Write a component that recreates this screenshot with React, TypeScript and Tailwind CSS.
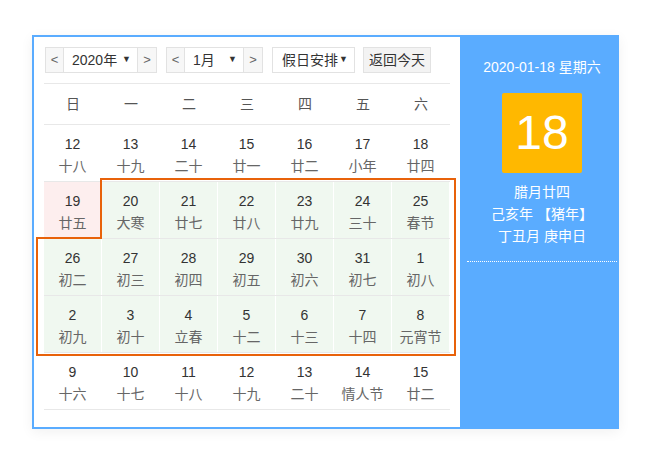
import React from 'react';

const FONT = { fontFamily: '"Liberation Sans", "Noto Sans CJK SC", sans-serif' };

type Cell = { d: number; l: string; bg?: 'pink' | 'green' };

const weekdays = ['日', '一', '二', '三', '四', '五', '六'];

const rows: Cell[][] = [
  [
    { d: 12, l: '十八' },
    { d: 13, l: '十九' },
    { d: 14, l: '二十' },
    { d: 15, l: '廿一' },
    { d: 16, l: '廿二' },
    { d: 17, l: '小年' },
    { d: 18, l: '廿四' },
  ],
  [
    { d: 19, l: '廿五', bg: 'pink' },
    { d: 20, l: '大寒', bg: 'green' },
    { d: 21, l: '廿七', bg: 'green' },
    { d: 22, l: '廿八', bg: 'green' },
    { d: 23, l: '廿九', bg: 'green' },
    { d: 24, l: '三十', bg: 'green' },
    { d: 25, l: '春节', bg: 'green' },
  ],
  [
    { d: 26, l: '初二', bg: 'green' },
    { d: 27, l: '初三', bg: 'green' },
    { d: 28, l: '初四', bg: 'green' },
    { d: 29, l: '初五', bg: 'green' },
    { d: 30, l: '初六', bg: 'green' },
    { d: 31, l: '初七', bg: 'green' },
    { d: 1, l: '初八', bg: 'green' },
  ],
  [
    { d: 2, l: '初九', bg: 'green' },
    { d: 3, l: '初十', bg: 'green' },
    { d: 4, l: '立春', bg: 'green' },
    { d: 5, l: '十二', bg: 'green' },
    { d: 6, l: '十三', bg: 'green' },
    { d: 7, l: '十四', bg: 'green' },
    { d: 8, l: '元宵节', bg: 'green' },
  ],
  [
    { d: 9, l: '十六' },
    { d: 10, l: '十七' },
    { d: 11, l: '十八' },
    { d: 12, l: '十九' },
    { d: 13, l: '二十' },
    { d: 14, l: '情人节' },
    { d: 15, l: '廿二' },
  ],
];

function Stepper({ label, mid }: { label: string; mid: string }) {
  return (
    <div className={`flex h-[26px] border border-[#e2e2e2] ${mid}`}>
      <div className="w-[18px] bg-[#f7f7f7] border-r border-[#e2e2e2] flex items-center justify-center text-[13px] text-[#666]">
        &lt;
      </div>
      <div className="flex-1 flex items-center justify-between pl-[8px] pr-[6px] text-[14px] text-[#333]">
        <span>{label}</span>
        <span className="text-[9px] text-[#333]">▼</span>
      </div>
      <div className="w-[19px] bg-[#f7f7f7] border-l border-[#e2e2e2] flex items-center justify-center text-[13px] text-[#666]">
        &gt;
      </div>
    </div>
  );
}

export default function App() {
  return (
    <div className="min-h-[460px] bg-white pt-[35px] pl-[32px]" style={FONT}>
      <div className="flex w-[587px] h-[394px] border-2 border-[#5aacff] shadow-[0_3px_12px_rgba(0,0,0,0.06)]">
        {/* left: calendar */}
        <div className="relative shrink-0 w-[426px] bg-white px-[10px] pt-[10px]">
          {/* toolbar */}
          <div className="flex items-center pl-[1px]">
            <Stepper label="2020年" mid="w-[112px]" />
            <div className="ml-[9px]">
              <Stepper label="1月" mid="w-[97px]" />
            </div>
            <div className="ml-[9px] w-[83px] h-[26px] border border-[#e2e2e2] flex items-center justify-between pl-[9px] pr-[6px] text-[14px] text-[#333]">
              <span>假日安排</span>
              <span className="text-[9px]">▼</span>
            </div>
            <div className="ml-[8px] w-[68px] h-[26px] border border-[#e2e2e2] bg-[#f3f3f3] flex items-center justify-center text-[14px] text-[#333]">
              返回今天
            </div>
          </div>

          {/* table */}
          <div className="mt-[10px] border-t border-[#e8e8e8]">
            <div className="grid grid-cols-7 h-[41px] border-b border-[#e8e8e8]">
              {weekdays.map((w) => (
                <div key={w} className="flex items-center justify-center text-[14px] text-[#555]">
                  {w}
                </div>
              ))}
            </div>
            {rows.map((row, i) => (
              <div key={i} className="grid grid-cols-7 h-[57px] border-b border-[#e8e8e8]">
                {row.map((c, j) => (
                  <div
                    key={j}
                    className={`flex flex-col items-center pt-[9px] border-r border-white ${
                      c.bg === 'pink' ? 'bg-[#fdeeee]' : c.bg === 'green' ? 'bg-[#f0f8f0]' : ''
                    }`}
                  >
                    <span className="text-[14px] leading-[20px] text-[#333]">{c.d}</span>
                    <span className="mt-[1px] text-[14px] leading-[22px] text-[#666]">{c.l}</span>
                  </div>
                ))}
              </div>
            ))}
          </div>

          {/* holiday outline */}
          <svg className="absolute left-0 top-0 pointer-events-none" width="426" height="390">
            <path
              d="M67 142 H421 V318 H3 V201 H67 Z"
              fill="none"
              stroke="#e8620a"
              strokeWidth="2"
            />
          </svg>
        </div>

        {/* right: today panel */}
        <div className="flex-1 bg-[#5aacff] flex flex-col items-center pt-[21px] pl-[7px] text-white">
          <div className="text-[14px] leading-[18px]">2020-01-18 星期六</div>
          <div className="mt-[17px] w-[80px] h-[80px] rounded-[2px] bg-[#ffb800] flex items-center justify-center text-[48px] leading-none">
            18
          </div>
          <div className="mt-[8px] flex flex-col items-center text-[14px] leading-[22px]">
            <span>腊月廿四</span>
            <span>己亥年 【猪年】</span>
            <span>丁丑月 庚申日</span>
          </div>
          <div className="mt-[14px] w-[150px] border-t border-dotted border-white" />
        </div>
      </div>
    </div>
  );
}
